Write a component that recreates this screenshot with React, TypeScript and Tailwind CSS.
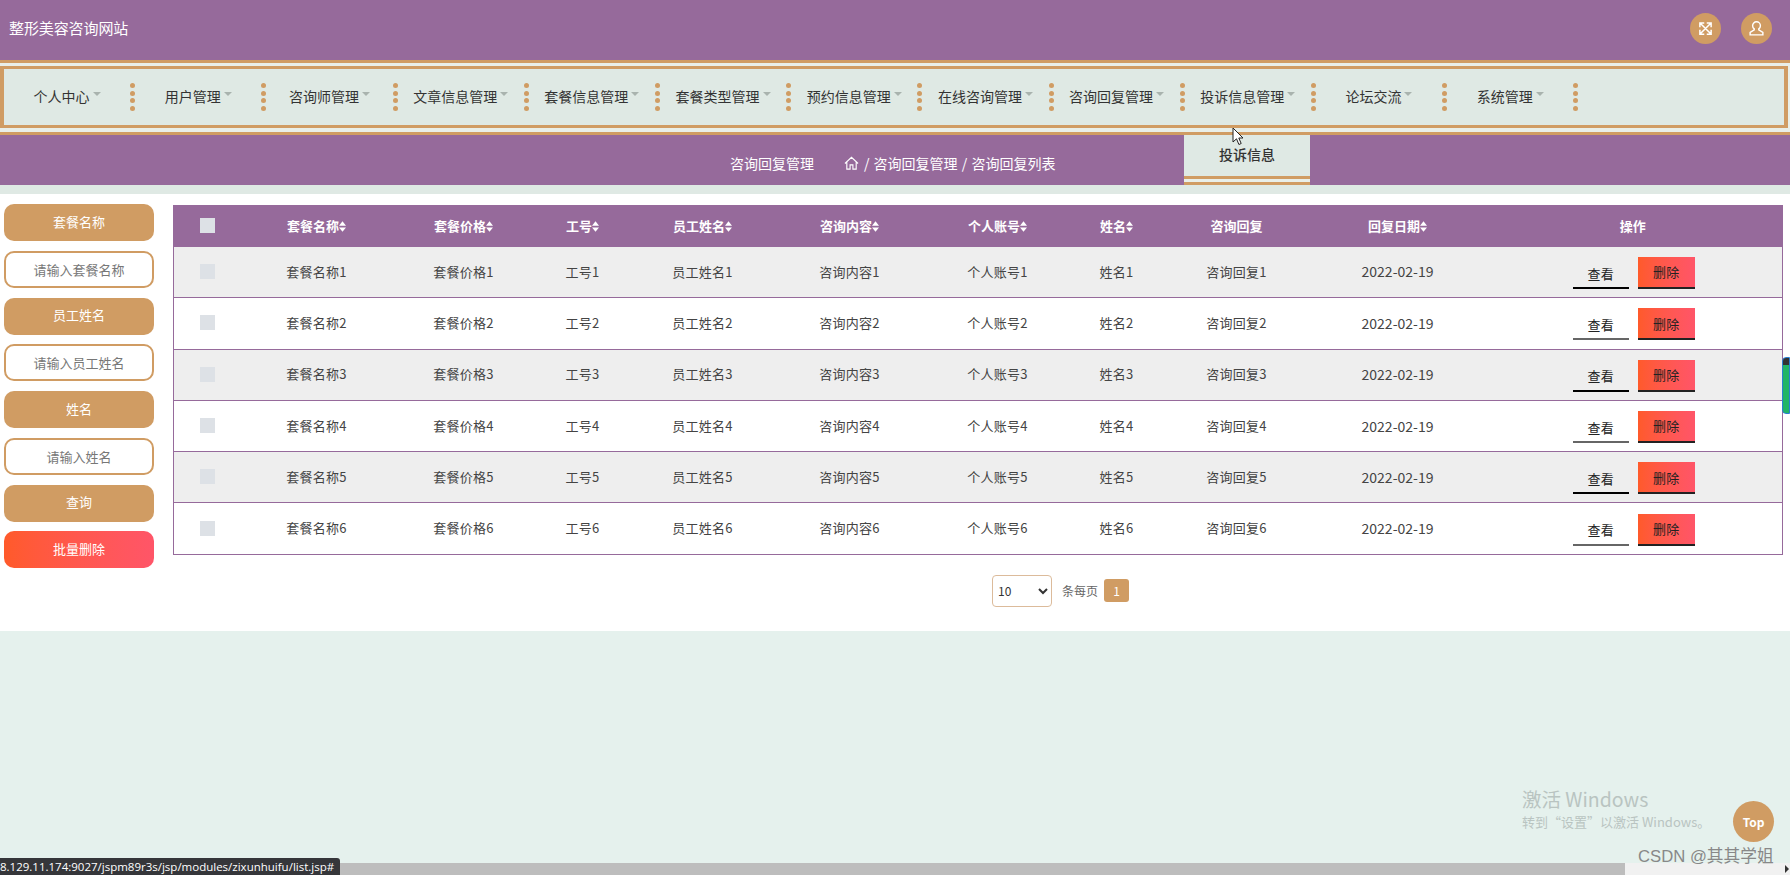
const navItems = [
  "个人中心",
  "用户管理",
  "咨询师管理",
  "文章信息管理",
  "套餐信息管理",
  "套餐类型管理",
  "预约信息管理",
  "在线咨询管理",
  "咨询回复管理",
  "投诉信息管理",
  "论坛交流",
  "系统管理",
]

const columns = [
  { label: "套餐名称", sort: true, width: "w-[150px]" },
  { label: "套餐价格", sort: true, width: "w-[144px]" },
  { label: "工号", sort: true, width: "w-[94px]" },
  { label: "员工姓名", sort: true, width: "w-[146px]" },
  { label: "咨询内容", sort: true, width: "w-[148px]" },
  { label: "个人账号", sort: true, width: "w-[148px]" },
  { label: "姓名", sort: true, width: "w-[90px]" },
  { label: "咨询回复", sort: false, width: "w-[150px]" },
  { label: "回复日期", sort: true, width: "w-[172px]" },
]

const rows = [1, 2, 3, 4, 5, 6]

function SortIcon() {
  return (
    <svg viewBox="0 0 8 12" className="inline-block h-[11px] w-[7px] align-[-1px]" fill="currentColor">
      <path d="M4 0 8 5H0zM4 12 0 7h8z" />
    </svg>
  )
}

function ExpandIcon() {
  return (
    <svg viewBox="0 0 24 24" className="h-[15px] w-[15px]" fill="none" stroke="currentColor" strokeWidth="2.4">
      <path d="M4 4l16 16M20 4 4 20M3 10V3h7M14 3h7v7M3 14v7h7M21 14v7h-7" />
    </svg>
  )
}

function UserIcon() {
  return (
    <svg viewBox="0 0 24 24" className="h-[17px] w-[17px]" fill="none" stroke="currentColor" strokeWidth="2">
      <path d="M12 2.5a5.5 5.5 0 0 0-5.5 5.5c0 2 1 3.6 2.3 4.6V14L3 17.5V21h18v-3.5L15.200 14v-1.400c1.300-1 2.300-2.600 2.300-4.600A5.500 5.500 0 0 0 12 2.500z" />
    </svg>
  )
}

function HomeIcon() {
  return (
    <svg viewBox="0 0 16 14" className="h-[14px] w-[15px]" fill="none" stroke="currentColor" strokeWidth="1.2">
      <path d="M1 7.500 8 1l7 6.500M3 6v7.500h3.500V9h3v4.500H13V6" />
    </svg>
  )
}

export default function App() {
  return (
    <div className="relative flex h-[875px] w-[1790px] flex-col overflow-hidden bg-[#e5f1ed] font-['Noto_Sans_CJK_SC','Noto_Sans',sans-serif] text-[13px] text-[#444]">
      {/* Top bar */}
      <header className="flex h-[60px] items-center justify-between bg-[#966a9b] pb-[3px] pl-[9px] pr-[18px] text-white">
        <div className="text-[15px] tracking-[-0.1px]">整形美容咨询网站</div>
        <div className="flex gap-[20px]">
          <div className="flex h-[31px] w-[31px] items-center justify-center rounded-full bg-[#d09c63]">
            <ExpandIcon />
          </div>
          <div className="flex h-[31px] w-[31px] items-center justify-center rounded-full bg-[#d09c63]">
            <UserIcon />
          </div>
        </div>
      </header>

      {/* Nav */}
      <div className="bg-[#e9efe9]">
        <div className="h-[6px] border-t-[3px] border-[#d09c63]" />
        <nav className="mr-[2px] flex h-[62px] items-center border-x-4 border-y-[3px] border-[#d09c63] bg-[#dfe9e4] text-sm text-[#333]">
          {navItems.map((item) => (
            <div key={item} className="flex h-full w-[131.2px] items-center">
              <div className="flex flex-1 items-center justify-center gap-[3px] pb-[2px]">
                <span>{item}</span>
                <span className="mt-[-4px] h-0 w-0 border-x-[4px] border-t-[4px] border-x-transparent border-t-[#a9b3ae]" />
              </div>
              <div className="flex h-[28px] flex-col justify-between">
                {[0, 1, 2, 3].map((dot) => (
                  <span key={dot} className="block h-[5px] w-[5px] rounded-full bg-[#d09c63]" />
                ))}
              </div>
            </div>
          ))}
        </nav>
        <div className="h-[7px] border-b-[3px] border-[#d09c63]" />
      </div>

      {/* Breadcrumb band */}
      <div className="relative flex h-[50px] items-center bg-[#966a9b] pt-[6px] text-sm text-white">
        <span className="ml-[730px]">咨询回复管理</span>
        <span className="ml-[30px] flex items-center gap-[5px]">
          <HomeIcon />
          <span className="[word-spacing:1px]">/ 咨询回复管理 / 咨询回复列表</span>
        </span>
        {/* Open dropdown of 投诉信息管理 */}
        <div className="absolute left-[1184px] top-0 flex h-[50px] w-[126px] flex-col bg-[#dfe9e4] text-[#333]">
          <div className="flex flex-1 items-center justify-center pb-[3px] font-medium">投诉信息</div>
          <div className="h-[9px] border-y-[3px] border-[#d09c63] bg-[#e9efe9]" />
        </div>
      </div>
      <div className="h-[9px] bg-[#dfe9e4]" />

      {/* Content */}
      <main className="flex h-[437px] gap-[19px] bg-white pl-[4px] pr-[7px] pt-[10px]">
        <aside className="flex w-[150px] flex-col gap-[9.75px]">
          <div className="flex h-[37px] items-center justify-center rounded-[10px] bg-[#d09c63] pb-[2px] text-white">套餐名称</div>
          <input readOnly placeholder="请输入套餐名称" className="h-[37px] rounded-[10px] border-2 border-[#d09c63] bg-white text-center text-[13px] outline-none placeholder:text-[#777]" />
          <div className="flex h-[37px] items-center justify-center rounded-[10px] bg-[#d09c63] pb-[2px] text-white">员工姓名</div>
          <input readOnly placeholder="请输入员工姓名" className="h-[37px] rounded-[10px] border-2 border-[#d09c63] bg-white text-center text-[13px] outline-none placeholder:text-[#777]" />
          <div className="flex h-[37px] items-center justify-center rounded-[10px] bg-[#d09c63] pb-[2px] text-white">姓名</div>
          <input readOnly placeholder="请输入姓名" className="h-[37px] rounded-[10px] border-2 border-[#d09c63] bg-white text-center text-[13px] outline-none placeholder:text-[#777]" />
          <div className="flex h-[37px] items-center justify-center rounded-[10px] bg-[#d09c63] pb-[2px] text-white">查询</div>
          <div className="flex h-[37px] items-center justify-center rounded-[10px] bg-gradient-to-r from-[#ff5a2a] to-[#ff5568] pb-[2px] text-white">批量删除</div>
        </aside>

        <div className="flex-1 pt-px">
          <table className="w-[1610px] table-fixed border-collapse border border-[#966a9b] text-center">
            <colgroup>
              <col className="w-[68px]" />
              {columns.map((col) => (
                <col key={col.label} className={col.width} />
              ))}
              <col />
            </colgroup>
            <thead>
              <tr className="h-[41px] bg-[#966a9b] font-bold text-white">
                <th className="pb-[2px]">
                  <span className="mx-auto block h-[15px] w-[15px] bg-[#dde1e6]" />
                </th>
                {columns.map((col) => (
                  <th key={col.label} className="pb-[2px]">
                    {col.label}
                    {col.sort && <SortIcon />}
                  </th>
                ))}
                <th className="pb-[2px]">操作</th>
              </tr>
            </thead>
            <tbody className="tracking-[0.3px]">
              {rows.map((n) => (
                <tr key={n} className="h-[51.3px] border-b border-[#966a9b] odd:bg-[#eeeeee] even:bg-white">
                  <td className="pb-px">
                    <span className="mx-auto block h-[15px] w-[15px] bg-[#dde1e6]" />
                  </td>
                  <td className="pb-px">套餐名称{n}</td>
                  <td className="pb-px">套餐价格{n}</td>
                  <td className="pb-px">工号{n}</td>
                  <td className="pb-px">员工姓名{n}</td>
                  <td className="pb-px">咨询内容{n}</td>
                  <td className="pb-px">个人账号{n}</td>
                  <td className="pb-px">姓名{n}</td>
                  <td className="pb-px">咨询回复{n}</td>
                  <td className="pb-px text-sm tracking-normal">2022-02-19</td>
                  <td>
                    <div className="flex justify-center gap-[9px] pl-[2px] pt-[2px]">
                      <div className={`flex h-[32px] w-[56px] items-center justify-center border-b-2 pt-[3px] text-[#222] ${n % 2 ? "border-black" : "border-[#666]"}`}>查看</div>
                      <div className="flex h-[32px] w-[57px] items-center justify-center border-b-2 border-[#222] bg-gradient-to-r from-[#ff5a2a] to-[#ff5568] text-[#222]">删除</div>
                    </div>
                  </td>
                </tr>
              ))}
            </tbody>
          </table>

          {/* Pagination */}
          <div className="mt-5 flex items-center pl-[819px] text-xs text-[#666]">
            <select className="h-[32px] w-[60px] rounded border border-[#dcbb9b] bg-white px-[1px] text-[#333]">
              <option>10</option>
            </select>
            <span className="ml-[10px]">条每页</span>
            <span className="ml-[6px] flex h-[23px] w-[25px] items-center justify-center rounded-[3px] bg-[#d09c63] text-white">1</span>
          </div>
        </div>
      </main>

      {/* Horizontal scrollbar of the window */}
      <div className="mt-auto flex h-[12px] bg-[#f1f1f1]">
        <div className="w-[1625px] bg-[#bdbdbd]" />
        <div className="flex flex-1 items-center justify-end pr-px">
          <span className="h-0 w-0 border-y-[4px] border-l-[4px] border-y-transparent border-l-[#333]" />
        </div>
      </div>

      {/* Overlays */}
      <div className="absolute right-0 top-[357px] h-[57px] w-[8px] rounded-l-sm border border-[#2b7fd0] bg-gradient-to-b from-[#333] from-12% to-[#22b566] to-12%" />

      <svg viewBox="0 0 12 19" className="absolute left-[1232px] top-[127px] h-[19px] w-[12px]">
        <path d="M1 1v14l3.500-3.200 2.400 5.700 2.300-1-2.400-5.500H11z" fill="#fff" stroke="#222" strokeWidth="1" />
      </svg>

      <div className="absolute left-[1522px] top-[785px] text-[#b9c4c1]">
        <div className="text-[19.5px] leading-[27px]">激活 Windows</div>
        <div className="text-[13px] leading-[20px]">转到“设置”以激活 Windows。</div>
      </div>

      <div className="absolute left-[1733px] top-[801px] flex h-[41px] w-[41px] items-center justify-center rounded-full bg-[#d09c63] text-xs font-semibold text-white">Top</div>

      <div className="absolute left-[1638px] top-[845px] font-['Liberation_Sans','Noto_Sans_CJK_SC',sans-serif] text-[16.7px] leading-[24px] text-[#888]">CSDN @其其学姐</div>

      <div className="absolute bottom-0 left-0 flex h-[17px] w-[340px] items-center rounded-tr-[3px] bg-[#35363a] font-['Open_Sans',sans-serif] text-[11.5px] text-white">
        8.129.11.174:9027/jspm89r3s/jsp/modules/zixunhuifu/list.jsp#
      </div>
    </div>
  )
}
